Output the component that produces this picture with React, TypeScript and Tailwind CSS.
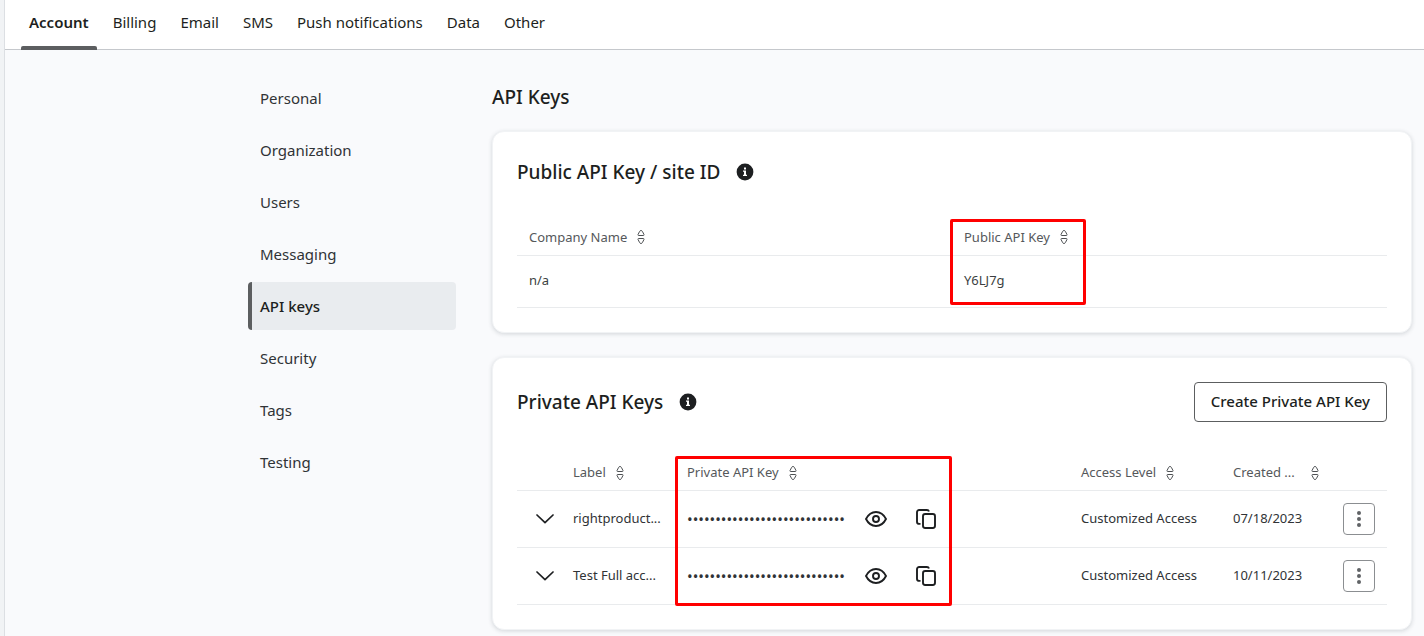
import React from "react";

const tabs = ["Account", "Billing", "Email", "SMS", "Push notifications", "Data", "Other"];

const sections = [
  "Personal",
  "Organization",
  "Users",
  "Messaging",
  "API keys",
  "Security",
  "Tags",
  "Testing",
];

const privateKeys = [
  { label: "rightproduct...", access: "Customized Access", created: "07/18/2023" },
  { label: "Test Full acc...", access: "Customized Access", created: "10/11/2023" },
];

const MASK = "•".repeat(28);

function InfoIcon() {
  return (
    <svg width="18" height="18" viewBox="0 0 18 18" aria-hidden="true">
      <circle cx="9" cy="9" r="8.4" fill="#1d1f21" />
      <path d="M8 4.4h2v2H8zM7 7.5h3v4.3h1V13H7v-1.2h1V8.7H7z" fill="#fff" />
    </svg>
  );
}

function SortIcon() {
  return (
    <svg width="8" height="14" viewBox="0 0 8 14" fill="none" stroke="#4d5053" strokeLinejoin="round">
      <path d="M1.500 5.500h5c.5 0 .7-.5.500-.9L5.500 1.600C5.200.9 4.700.500 4 .5s-1.200.4-1.500 1.100L1 4.600c-.2.4 0 .9.500.9z" />
      <path d="M1.500 8.500h5c.5 0 .7.5.500.9l-1.500 3c-.3.700-.8 1.100-1.500 1.100s-1.200-.4-1.500-1.100L1 9.400c-.2-.4 0-.9.500-.9z" />
    </svg>
  );
}

function ChevronIcon() {
  return (
    <svg width="18" height="10" viewBox="0 0 18 10" fill="none" stroke="#1d1f21" strokeWidth="1.7">
      <path d="M1 1l8 7.700L17 1" strokeLinecap="round" strokeLinejoin="round" />
    </svg>
  );
}

function EyeIcon() {
  return (
    <svg width="22" height="16" viewBox="0 0 22 16" fill="none" stroke="#1d1f21" strokeWidth="1.9">
      <path
        d="M1 8c2.300-4.500 5.900-7 10-7s7.700 2.500 10 7c-2.300 4.500-5.900 7-10 7S3.300 12.500 1 8z"
        strokeLinejoin="round"
      />
      <circle cx="11" cy="8" r="3" />
    </svg>
  );
}

function CopyIcon() {
  return (
    <svg width="20" height="20" viewBox="0 0 20 20" fill="none" stroke="#1d1f21" strokeWidth="1.900">
      <rect x="7" y="5" width="12" height="14" rx="2.200" />
      <path d="M4.500 14.900H3.200A2.200 2.200 0 0 1 1 12.700V3.200A2.200 2.200 0 0 1 3.200 1h7.600A2.200 2.200 0 0 1 13 2.500" />
    </svg>
  );
}

function DotsIcon() {
  return (
    <svg width="4" height="16" viewBox="0 0 4 16" fill="#606366">
      <circle cx="2" cy="2" r="2" />
      <circle cx="2" cy="8" r="2" />
      <circle cx="2" cy="14" r="2" />
    </svg>
  );
}

function SortHeader({ title, spread = false }: { title: string; spread?: boolean }) {
  return (
    <th scope="col" className="h-[35px] px-3 font-normal">
      <button
        type="button"
        className={
          spread
            ? "flex w-full items-center justify-between text-[#55585b]"
            : "flex items-center gap-2.5 text-[#55585b]"
        }
      >
        <span className="whitespace-nowrap">{title}</span>
        <SortIcon />
      </button>
    </th>
  );
}

function Card({ children }: { children: React.ReactNode }) {
  return (
    <section className="rounded-xl border border-[#f1f3f5] bg-white p-6 shadow-[0_1px_4px_rgba(40,50,60,0.18)]">
      {children}
    </section>
  );
}

function CardTitle({ children }: { children: React.ReactNode }) {
  return (
    <div className="flex items-center gap-4">
      <h2 className="text-[19px] leading-8 font-medium">{children}</h2>
      <button type="button" aria-label="More information">
        <InfoIcon />
      </button>
    </div>
  );
}

export default function App() {
  return (
    <div className="min-h-screen border-l-4 border-[#f1f3f5] bg-[#f9fafc] font-['Noto_Sans','Open_Sans',sans-serif] text-[#1d1f21]">
      <div className="min-h-screen border-l border-[#dcdfe3]">
        <nav className="flex h-[50px] gap-2 border-b border-[#c5c8cc] bg-white pl-4">
          {tabs.map((tab, i) => (
            <a
              key={tab}
              href="#"
              className={
                i === 0
                  ? "relative px-2 pt-2.5 text-[15px] leading-6 font-semibold"
                  : "px-2 pt-2.5 text-[15px] leading-6"
              }
            >
              {tab}
              {i === 0 && (
                <span className="absolute inset-x-0 -bottom-px h-1 rounded-t-xs bg-[#5c5e60]" />
              )}
            </a>
          ))}
        </nav>

        <div className="flex gap-9 pt-6 pr-3 pb-2 pl-[243px]">
          <aside className="flex w-52 shrink-0 flex-col gap-1">
            {sections.map((name) => (
              <a
                key={name}
                href="#"
                className={
                  name === "API keys"
                    ? "flex h-12 items-center rounded-sm border-l-4 border-[#5c5e60] bg-[#e9ecef] pl-2 text-[15px] font-medium"
                    : "flex h-12 items-center border-l-4 border-transparent pl-2 text-[15px] text-[#303336]"
                }
              >
                {name}
              </a>
            ))}
          </aside>

          <main className="min-w-0 flex-1">
            <h1 className="mt-[7px] mb-[18px] text-[19px] leading-8 font-medium">API Keys</h1>

            <div className="flex flex-col gap-6">
              <Card>
                <CardTitle>Public API Key / site ID</CardTitle>
                <div className="relative mt-8">
                  <table className="w-full table-fixed text-left text-[13px]">
                    <thead>
                      <tr className="border-b border-[#e9ebed]">
                        <SortHeader title="Company Name" />
                        <SortHeader title="Public API Key" />
                      </tr>
                    </thead>
                    <tbody>
                      <tr className="h-[52px] border-b border-[#e9ebed] text-[#3c3f42]">
                        <td className="px-3">n/a</td>
                        <td className="px-3">Y6LJ7g</td>
                      </tr>
                    </tbody>
                  </table>
                  <div className="pointer-events-none absolute -top-px left-1/2 -ml-0.5 h-[86px] w-[136px] rounded-xs border-3 border-[#ff0000]" />
                </div>
              </Card>

              <Card>
                <div className="flex items-center justify-between">
                  <CardTitle>Private API Keys</CardTitle>
                  <button
                    type="button"
                    className="h-10 rounded-sm border border-[#5c5e60] px-4 text-[15px] font-medium"
                  >
                    Create Private API Key
                  </button>
                </div>
                <div className="relative mt-[34px]">
                  <table className="w-full table-fixed text-left text-[13px]">
                    <colgroup>
                      <col className="w-11" />
                      <col className="w-[114px]" />
                      <col />
                      <col className="w-[152px]" />
                      <col className="w-[110px]" />
                      <col className="w-14" />
                    </colgroup>
                    <thead>
                      <tr className="border-b border-[#e9ebed]">
                        <td />
                        <SortHeader title="Label" />
                        <SortHeader title="Private API Key" />
                        <SortHeader title="Access Level" />
                        <SortHeader title="Created ..." spread />
                        <td />
                      </tr>
                    </thead>
                    <tbody>
                      {privateKeys.map((item) => (
                        <tr key={item.created} className="h-[57px] border-b border-[#e9ebed] text-[#303336]">
                          <td>
                            <button type="button" aria-label="Expand" className="ml-[19px] flex">
                              <ChevronIcon />
                            </button>
                          </td>
                          <td className="px-3 whitespace-nowrap">{item.label}</td>
                          <td className="px-3">
                            <div className="flex items-center">
                              <span className="w-[178px] text-[15px]">{MASK}</span>
                              <button type="button" aria-label="Show key" className="mr-[29px]">
                                <EyeIcon />
                              </button>
                              <button type="button" aria-label="Copy key">
                                <CopyIcon />
                              </button>
                            </div>
                          </td>
                          <td className="px-3">{item.access}</td>
                          <td className="px-3">{item.created}</td>
                          <td className="px-3">
                            <button
                              type="button"
                              aria-label="Options"
                              className="flex size-8 items-center justify-center rounded-sm border border-[#8b8e91]"
                            >
                              <DotsIcon />
                            </button>
                          </td>
                        </tr>
                      ))}
                    </tbody>
                  </table>
                  <div className="pointer-events-none absolute top-0 left-[158px] h-[150px] w-[277px] rounded-xs border-3 border-[#ff0000]" />
                </div>
              </Card>
            </div>
          </main>
        </div>
      </div>
    </div>
  );
}
